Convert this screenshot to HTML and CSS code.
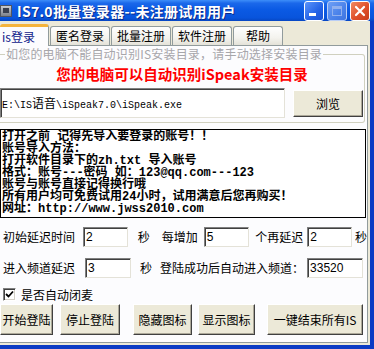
FILE: index.html
```html
<!DOCTYPE html>
<html>
	<head>
		<meta charset="utf-8">
		<title>IS7.0批量登录器</title>
		<link rel="stylesheet" href="styles.css">
	</head>
	<body>
		<div class="window">
			<div class="titlebar">
				<span class="app-icon"><i></i></span>
				<span class="title">IS7.0批量登录器--未注册试用用户</span>
				<span class="caption">
					<span class="cap-btn cap-min"><i></i></span>
					<span class="cap-btn cap-max"><i></i></span>
					<span class="cap-btn cap-close">
						<svg width="12" height="12" viewBox="0 0 12 12"><path d="M2 2 L10 10 M10 2 L2 10" stroke="#fff" stroke-width="2.2" stroke-linecap="round"/></svg>
					</span>
				</span>
			</div>
			<div class="client">
				<div class="tabs">
					<span class="tab active">is登录</span>
					<span class="tab">匿名登录</span>
					<span class="tab">批量注册</span>
					<span class="tab">软件注册</span>
					<span class="tab tab-help">帮助</span>
				</div>
				<div class="tab-page">
					<fieldset class="group">
						<legend>如您的电脑不能自动识别IS安装目录，请手动选择安装目录</legend>
						<div class="notice">您的电脑可以自动识别iSpeak安装目录</div>
						<div class="path-row">
							<div class="path-box">E:\IS<span class="cjk">语音</span>\iSpeak7.0\iSpeak.exe</div>
							<button class="btn btn-browse">浏览</button>
						</div>
					</fieldset>
					<div class="memo">
						<div>打开之前 记得先导入要登录的账号！！</div>
						<div>账号导入方法：</div>
						<div>打开软件目录下的zh.txt 导入账号</div>
						<div>格式：账号---密码 如：123@qq.com---123</div>
						<div>账号与账号直接记得换行哦</div>
						<div>所有用户均可免费试用24小时，试用满意后您再购买！</div>
						<div>网址：http://www.jwss2010.com</div>
					</div>
					<div class="row row-delay">
						<span class="lbl">初始延迟时间</span>
						<span class="field f-start">2</span>
						<span class="lbl unit">秒</span>
						<span class="lbl l-every">每增加</span>
						<span class="field f-every">5</span>
						<span class="lbl l-again">个再延迟</span>
						<span class="field f-again">2</span>
						<span class="lbl unit2">秒</span>
					</div>
					<div class="row row-channel">
						<span class="lbl">进入频道延迟</span>
						<span class="field f-chdelay">3</span>
						<span class="lbl unit3">秒</span>
						<span class="lbl l-channel">登陆成功后自动进入频道：</span>
						<span class="field f-channel">33520</span>
					</div>
					<div class="check-row">
						<span class="checkbox">
							<svg width="9" height="9" viewBox="0 0 9 9"><path d="M1 4 L3.5 6.5 L8 1.5" fill="none" stroke="#000" stroke-width="1.8"/></svg>
						</span>
						<span>是否自动闭麦</span>
					</div>
					<div class="btn-row">
						<button class="btn b-start">开始登陆</button>
						<button class="btn b-stop">停止登陆</button>
						<button class="btn b-hide">隐藏图标</button>
						<button class="btn b-show">显示图标</button>
						<button class="btn b-kill">一键结束所有IS</button>
					</div>
				</div>
			</div>
		</div>
	</body>
</html>
```

FILE: styles.css
```css
body {
	margin: 0;
	background: #0a3cc8;
	font-family: "Noto Sans CJK SC", sans-serif;
	font-size: 12px;
}

.window {
	width: 374px;
	height: 349px;
	display: flex;
	flex-direction: column;
	background: #0b3bc4;
	overflow: hidden;
}

/*** title bar **/

.titlebar {
	height: 21px;
	flex: none;
	display: flex;
	align-items: center;
	background: linear-gradient(#3d8ef9 0%, #1b68ea 15%, #0b5ae4 45%, #0854dc 85%, #0746c2 100%);
	color: #fff;
}

.app-icon {
	width: 12px;
	height: 12px;
	margin-left: 0;
	background: linear-gradient(#c9ccd2, #7b808a);
	border: 1px solid #505560;
	box-sizing: border-box;
	display: flex;
	align-items: center;
	justify-content: center;
}

.app-icon i {
	width: 6px;
	height: 5px;
	background: #3a4050;
}

.title {
	margin-left: 5px;
	font-size: 14px;
	font-weight: bold;
	letter-spacing: 0.3px;
	line-height: 16px;
	text-shadow: 1px 1px 0 #0a2a8a;
}

.caption {
	margin-left: auto;
	margin-right: 4px;
	display: flex;
	gap: 3px;
}

.cap-btn {
	width: 20px;
	height: 20px;
	box-sizing: border-box;
	border: 1px solid #fff;
	border-radius: 3px;
	display: flex;
	align-items: center;
	justify-content: center;
	position: relative;
}

.cap-min {
	background: linear-gradient(135deg, #5b95fb, #2362e6 60%, #1a52d4);
}

.cap-min i {
	position: absolute;
	left: 4px;
	bottom: 4px;
	width: 7px;
	height: 3px;
	background: #fff;
}

.cap-max {
	background: linear-gradient(135deg, #6f9ff5, #4a82ea 60%, #3f74e0);
	border-color: #b9cdf5;
}

.cap-max i {
	width: 10px;
	height: 10px;
	box-sizing: border-box;
	border: 1px solid #90b0ef;
	border-top-width: 3px;
}

.cap-close {
	background: linear-gradient(135deg, #f08a62, #e0502a 55%, #c83c1c);
}

/*** client / tabs **/

.client {
	flex: 1;
	margin: 0 4px 4px 0;
	background: #ece9d8;
	display: flex;
	flex-direction: column;
}

.tabs {
	height: 24px;
	flex: none;
	display: flex;
	align-items: flex-end;
	gap: 1px;
}

.tab {
	height: 19px;
	box-sizing: border-box;
	padding: 0 5px;
	border: 1px solid #919b9c;
	border-bottom: none;
	border-radius: 3px 3px 0 0;
	background: linear-gradient(#fefefe, #f4f3ee 60%, #e4e2d8);
	line-height: 18px;
	color: #000;
	white-space: nowrap;
}

.tab.active {
	height: 22px;
	width: 49px;
	padding: 0 0 0 2px;
	border-left: none;
	border-top: 3px solid #f5b43c;
	background: #fcfcfe;
	color: #10208a;
	line-height: 19px;
	margin-bottom: -1px;
	position: relative;
}

.tab-help {
	padding: 0 12px;
}

.tab-page {
	flex: 1;
	margin: 0 2px 2px 0;
	border: 1px solid #919b9c;
	border-left: none;
	background: #fcfcfe;
}

/*** group box **/

.group {
	margin: 1px 0 0 0;
	padding: 0 0 4px 0;
	border: 1px solid #d0d0bf;
	border-left: none;
	border-radius: 0 3px 3px 0;
	width: 365px;
	box-sizing: border-box;
}

.group legend {
	margin-left: 5px;
	padding: 0 1px;
	line-height: 14px;
	letter-spacing: 0.2px;
	color: #a7a6aa;
}

.notice {
	margin-top: 5px;
	text-align: center;
	font-size: 14.5px;
	font-weight: bold;
	line-height: 16px;
	color: #f00;
}

.path-row {
	margin-top: 6px;
	display: flex;
	align-items: center;
}

.path-box {
	width: 285px;
	height: 30px;
	box-sizing: border-box;
	border: 1px solid;
	border-color: #808080 #e4e2d8 #e4e2d8 #808080;
	box-shadow: inset 1px 1px 0 #404040;
	background: #fff;
	font-family: "Liberation Mono", monospace;
	font-size: 10px;
	line-height: 28px;
	padding-left: 1px;
}

.path-box .cjk {
	font-family: "Noto Sans CJK SC", sans-serif;
	font-size: 12px;
}

.btn {
	background: #ece9d8;
	border: 1px solid;
	border-color: #fff #404040 #404040 #fff;
	box-shadow: inset -1px -1px 0 #aca899;
	font-family: "Noto Sans CJK SC", sans-serif;
	font-size: 12px;
	color: #000;
	padding: 0;
}

.btn-browse {
	width: 70px;
	height: 27px;
	margin-left: 8px;
}

/*** memo **/

.memo {
	margin-top: 6px;
	width: 366px;
	height: 89px;
	box-sizing: border-box;
	border: 1px solid #000;
	background: #fff;
	padding: 1px 0 0 1px;
	font-family: "Liberation Mono", "Noto Sans CJK SC", monospace;
	font-weight: bold;
	font-size: 12px;
	line-height: 12px;
	color: #000;
	white-space: nowrap;
	overflow: hidden;
}

/*** option rows **/

.row {
	display: flex;
	align-items: center;
	height: 20px;
}

.row-delay {
	margin-top: 9px;
}

.row-channel {
	margin-top: 11px;
}

.lbl {
	white-space: nowrap;
	line-height: 14px;
}

.row .lbl:first-child {
	margin-left: 3px;
}

.field {
	height: 20px;
	box-sizing: border-box;
	border: 1px solid;
	border-color: #808080 #e4e2d8 #e4e2d8 #808080;
	box-shadow: inset 1px 1px 0 #404040;
	background: #fff;
	font-family: "Liberation Sans", sans-serif;
	font-size: 12px;
	line-height: 18px;
	padding-left: 2px;
}

.f-start { width: 47px; margin-left: 8px; }
.unit { margin-left: 10px; }
.l-every { margin-left: 12px; }
.f-every { width: 48px; margin-left: 6px; }
.l-again { margin-left: 6px; }
.f-again { width: 47px; margin-left: 4px; }
.unit2 { margin-left: 3px; }

.f-chdelay { width: 46px; margin-left: 10px; }
.unit3 { margin-left: 9px; }
.l-channel { margin-left: 8px; }
.f-channel { width: 56px; margin-left: 3px; }

.check-row {
	margin-top: 10px;
	height: 13px;
	display: flex;
	align-items: center;
	line-height: 14px;
}

.checkbox {
	width: 13px;
	height: 13px;
	margin-left: 3px;
	margin-right: 5px;
	box-sizing: border-box;
	border: 1px solid;
	border-color: #808080 #fff #fff #808080;
	box-shadow: inset 1px 1px 0 #404040, inset -1px -1px 0 #d4d0c8;
	background: #fff;
	display: flex;
	align-items: center;
	justify-content: center;
}

.btn-row {
	margin-top: 3px;
	display: flex;
}

.btn-row .btn {
	height: 31px;
}

.b-start { width: 53px; }
.b-stop { width: 60px; margin-left: 7px; }
.b-hide { width: 59px; margin-left: 13px; }
.b-show { width: 57px; margin-left: 6px; }
.b-kill { width: 96px; margin-left: 12px; }
```
